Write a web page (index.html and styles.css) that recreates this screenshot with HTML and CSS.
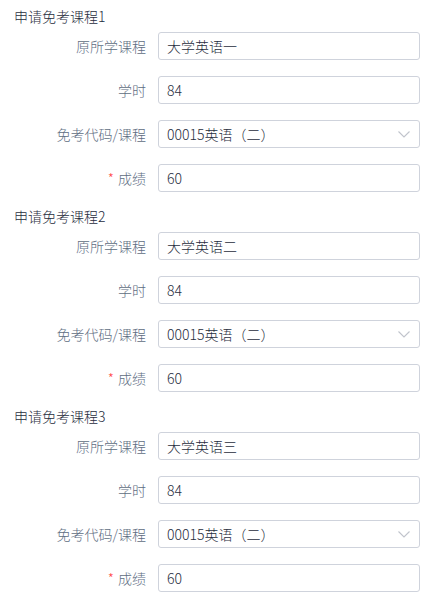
FILE: index.html
```html
<!DOCTYPE html>
<html lang="zh-CN">
<head>
<meta charset="utf-8">
<title>申请免考课程</title>
<link rel="stylesheet" href="styles.css">
</head>
<body>
<div class="form">
  <section class="group">
    <div class="group-title">申请免考课程1</div>
    <div class="row"><label class="label">原所学课程</label><div class="control">大学英语一</div></div>
    <div class="row"><label class="label">学时</label><div class="control">84</div></div>
    <div class="row"><label class="label">免考代码/课程</label><div class="control select"><span>00015英语（二）</span><svg class="chev" width="12" height="7" viewBox="0 0 12 7"><path d="M0.5 0.5 L6 6 L11.5 0.5" fill="none" stroke="#c0c4cc" stroke-width="1.1"/></svg></div></div>
    <div class="row"><label class="label"><span class="req">*</span>成绩</label><div class="control">60</div></div>
  </section>
  <section class="group">
    <div class="group-title">申请免考课程2</div>
    <div class="row"><label class="label">原所学课程</label><div class="control">大学英语二</div></div>
    <div class="row"><label class="label">学时</label><div class="control">84</div></div>
    <div class="row"><label class="label">免考代码/课程</label><div class="control select"><span>00015英语（二）</span><svg class="chev" width="12" height="7" viewBox="0 0 12 7"><path d="M0.5 0.5 L6 6 L11.5 0.5" fill="none" stroke="#c0c4cc" stroke-width="1.1"/></svg></div></div>
    <div class="row"><label class="label"><span class="req">*</span>成绩</label><div class="control">60</div></div>
  </section>
  <section class="group">
    <div class="group-title">申请免考课程3</div>
    <div class="row"><label class="label">原所学课程</label><div class="control">大学英语三</div></div>
    <div class="row"><label class="label">学时</label><div class="control">84</div></div>
    <div class="row"><label class="label">免考代码/课程</label><div class="control select"><span>00015英语（二）</span><svg class="chev" width="12" height="7" viewBox="0 0 12 7"><path d="M0.5 0.5 L6 6 L11.5 0.5" fill="none" stroke="#c0c4cc" stroke-width="1.1"/></svg></div></div>
    <div class="row"><label class="label"><span class="req">*</span>成绩</label><div class="control">60</div></div>
  </section>
</div>
</body>
</html>
```
FILE: styles.css
```css
html, body {
  margin: 0;
  padding: 0;
  background: #ffffff;
}
body {
  font-family: "Noto Sans CJK SC", "Noto Sans", sans-serif;
  font-size: 14px;
  font-weight: 300;
  color: #1f2d3d;
}
.form {
  padding: 0 22px 0 14px;
}
.group {
  display: flex;
  flex-direction: column;
  gap: 16px;
  padding-bottom: 8px;
}
.group-title {
  height: 32px;
  line-height: 33px;
  margin-bottom: -16px;
  color: #1f2d3d;
  white-space: nowrap;
}
.row {
  display: grid;
  grid-template-columns: 132px 1fr;
  column-gap: 12px;
  align-items: center;
  height: 28px;
}
.label {
  text-align: right;
  color: #5e6d82;
  line-height: 28px;
  white-space: nowrap;
}
.req {
  color: #ff4949;
  margin-right: 4px;
}
.control {
  box-sizing: border-box;
  height: 28px;
  border: 1px solid #cfd3dc;
  border-radius: 3px;
  padding: 0 8px;
  line-height: 26px;
  color: #1f2d3d;
  display: flex;
  align-items: center;
  justify-content: space-between;
  white-space: nowrap;
}
.chev {
  display: block;
  margin-right: 1px;
}
```
